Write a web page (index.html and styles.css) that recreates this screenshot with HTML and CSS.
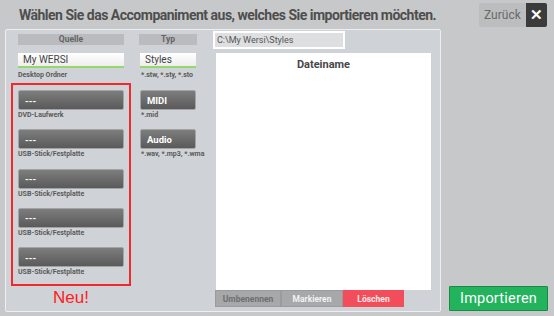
FILE: index.html
```html
<!DOCTYPE html>
<html lang="de">
<head>
  <meta charset="UTF-8" />
  <title>Accompaniment importieren</title>
  <link rel="stylesheet" href="styles.css">
</head>
<body>
  <!-- Kopfzeile -->
  <header class="top">
    <h1>Wählen Sie das Accompaniment aus, welches Sie importieren möchten.</h1>
    <button class="back">Zurück <span class="x">✕</span></button>
  </header>

  <main class="main">
    <section class="panel">
      <!-- Quelle -->
      <div class="col src">
        <div class="head">Quelle</div>
        <div class="field">My WERSI</div>
        <div class="hint">Desktop Ordner</div>
        <div class="newbox">
          <div class="item"><button class="dark">---</button><div class="hint">DVD-Laufwerk</div></div>
          <div class="item"><button class="dark">---</button><div class="hint">USB-Stick/Festplatte</div></div>
          <div class="item"><button class="dark">---</button><div class="hint">USB-Stick/Festplatte</div></div>
          <div class="item"><button class="dark">---</button><div class="hint">USB-Stick/Festplatte</div></div>
          <div class="item"><button class="dark">---</button><div class="hint">USB-Stick/Festplatte</div></div>
        </div>
        <div class="neu">Neu!</div>
      </div>

      <!-- Typ -->
      <div class="col typ">
        <div class="head">Typ</div>
        <div class="field">Styles</div>
        <div class="hint">*.stw, *.sty, *.sto</div>
        <div class="item"><button class="dark">MIDI</button><div class="hint">*.mid</div></div>
        <div class="item"><button class="dark">Audio</button><div class="hint">*.wav, *.mp3, *.wma</div></div>
      </div>

      <!-- Dateien -->
      <div class="files">
        <div class="path"><span>C:\My Wersi\Styles</span></div>
        <div class="list"><div class="list-head">Dateiname</div></div>
        <div class="actions">
          <button class="act">Umbenennen</button>
          <button class="act light">Markieren</button>
          <button class="act red">Löschen</button>
        </div>
      </div>
    </section>

    <div class="side">
      <button class="import">Importieren</button>
    </div>
  </main>
</body>
</html>
```

FILE: styles.css
```css
* { box-sizing: border-box; margin: 0; padding: 0; }
body {
  width: 554px;
  height: 316px;
  overflow: hidden;
  background: #c7c8c9;
  font-family: Roboto, sans-serif;
  color: #4d4d4d;
}
button { font-family: inherit; border: none; cursor: pointer; }

.top {
  height: 29px;
  display: flex;
  align-items: center;
  padding: 0 7px 0 19px;
}
.top h1 {
  font-size: 14px;
  font-weight: 700;
  color: #4e4e4e;
  letter-spacing: -0.5px;
  white-space: nowrap;
}
.back {
  flex-shrink: 0;
  margin-left: auto;
  height: 24px;
  width: 68px;
  display: flex;
  align-items: center;
  justify-content: space-between;
  padding-left: 5px;
  background: #bcbdbe;
  border-radius: 2px;
  color: #6a6a6a;
  font-size: 12px;
}
.back .x {
  width: 21px;
  height: 24px;
  background: #3b3b3b;
  color: #fff;
  font-weight: 700;
  font-size: 15px;
  line-height: 24px;
  text-align: center;
  border-radius: 0 2px 2px 0;
}

.main { display: flex; height: 287px; padding: 0 6px 4px 5px; }
.panel {
  flex-shrink: 0;
  width: 436px;
  height: 283px;
  background: #cfd2d6;
  border: 1px solid #eceef0;
  border-radius: 2px;
  display: flex;
  padding-left: 5px;
}

.col { display: flex; flex-direction: column; padding-top: 4px; flex-shrink: 0; }
.src { width: 120px; }
.src > .head, .src > .field, .src > .hint { margin-left: 7px; margin-right: 7px; }
.typ { width: 56px; margin-left: 9px; }
.typ .head { margin: 0 -1px; }

.head {
  height: 11px;
  background: #b9bbbe;
  font-size: 8.5px;
  font-weight: 700;
  line-height: 11px;
  text-align: center;
  color: #646464;
}
.field {
  margin-top: 8px;
  height: 15px;
  background: linear-gradient(#ffffff, #eeeeee);
  border-bottom: 2px solid #97d66a;
  font-size: 10px;
  line-height: 14px;
  padding-left: 5px;
  color: #444;
}
.hint {
  font-size: 7px;
  font-weight: 700;
  color: #5a5a5a;
  height: 10px;
  line-height: 10px;
  white-space: nowrap;
}
.field + .hint { margin-top: 2px; }
.typ .hint { padding-left: 1px; }

.newbox {
  margin-top: 3px;
  border: 2px solid #f02a2a;
  padding: 5px 5px 7px;
}
.item { margin-bottom: 9.3px; }
.newbox .item:last-child { margin-bottom: 0; }
.typ .field + .hint + .item { margin-top: 10px; }
.dark {
  display: block;
  width: 100%;
  height: 20px;
  background: linear-gradient(#7d7d7d, #5a5a5a);
  border: 1px solid #a3a3a3;
  border-radius: 2px;
  color: #fff;
  font-size: 9.5px;
  font-weight: 700;
  text-align: left;
  padding-left: 6px;
}
.neu {
  font-family: 'Liberation Sans', sans-serif;
  color: #ff2020;
  font-size: 17px;
  text-align: center;
  margin-top: 2px;
}

.files { margin-left: 17px; display: flex; flex-direction: column; }
.path {
  margin-top: 1px;
  width: 132px;
  height: 18px;
  background: #fff;
  padding: 2px;
}
.path span {
  display: block;
  height: 14px;
  background: #dedfe0;
  font-size: 9px;
  line-height: 14px;
  padding-left: 2px;
  color: #555;
}
.list {
  margin: 4px 0 0 3px;
  width: 215px;
  height: 237px;
  background: #fff;
}
.list-head {
  text-align: center;
  font-size: 11px;
  font-weight: 700;
  color: #474747;
  padding-top: 5px;
}
.actions { display: flex; margin-left: 2px; }
.act {
  height: 17px;
  width: 66px;
  background: #a6a8aa;
  border: 1px solid #999b9d;
  color: #6f6f6f;
  font-size: 8.5px;
  font-weight: 700;
}
.act.light { width: 62px; color: #f2f2f2; }
.act.red { width: 61px; background: #f24d5b; border-color: #f24d5b; color: #ffe9ea; }

.side { flex: 1; display: flex; align-items: flex-end; padding-left: 8px; }
.import {
  width: 99px;
  height: 25px;
  margin-bottom: 1px;
  background: #23b35d;
  border: 1px solid #178a45;
  border-radius: 1px;
  color: #fff;
  font-size: 14.5px;
  letter-spacing: 0.2px;
}
```
